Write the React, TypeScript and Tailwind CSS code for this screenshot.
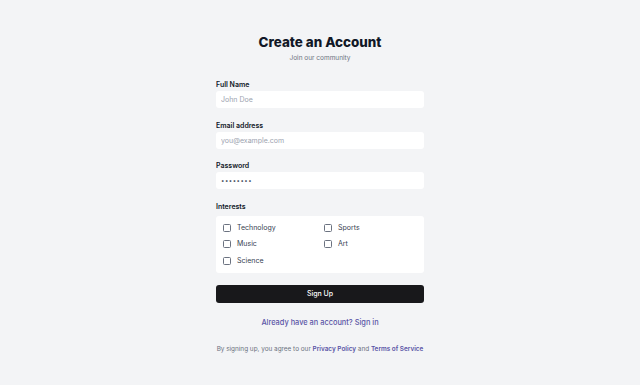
import React from "react";

const Field = ({ label, placeholder, type = "text", value }: { label: string; placeholder?: string; type?: string; value?: string }) => (
  <div className="flex flex-col">
    <label className="text-[7px] font-semibold text-[#111827] leading-[10px] mb-[1px]">{label}</label>
    <input
      type={type}
      placeholder={placeholder}
      defaultValue={value}
      className={
        "h-[17px] w-full rounded-[3px] bg-white px-[5px] text-[#374151] placeholder-[#9ca3af] outline-none " +
        (type === "password" ? "text-[6px] tracking-[0.5px]" : "text-[7px]")
      }
    />
  </div>
);

const Check = ({ label }: { label: string }) => (
  <label className="flex items-center gap-[6px] h-[16.5px]">
    <span className="w-[8px] h-[8px] rounded-[1.5px] border border-[#6b7280] bg-white" />
    <span className="text-[7px] text-[#374151]">{label}</span>
  </label>
);

export default function App() {
  return (
    <div className="min-h-[385px] w-full bg-[#f3f4f6] flex justify-center" style={{ fontFamily: "Inter, 'Noto Sans', sans-serif" }}>
      <div className="w-[208px] flex flex-col pt-[33px]">
        <h1 className="text-center text-[13.4px] font-extrabold text-[#111827] leading-[18px]">Create an Account</h1>
        <p className="text-center text-[6.5px] text-[#6b7280] mt-[2px] leading-[10px]">Join our community</p>
        <div className="flex flex-col gap-[12.5px] mt-[17px]">
          <Field label="Full Name" placeholder="John Doe" />
          <Field label="Email address" placeholder="you@example.com" type="email" />
          <Field label="Password" type="password" value="password" />
          <div className="flex flex-col">
            <span className="text-[7px] font-semibold text-[#111827] leading-[10px] mb-[4px]">Interests</span>
            <div className="bg-white rounded-[3px] grid grid-cols-[101px_1fr] pl-[7px] pr-[7px] py-[4px]">
              <Check label="Technology" />
              <Check label="Sports" />
              <Check label="Music" />
              <Check label="Art" />
              <Check label="Science" />
            </div>
          </div>
        </div>
        <button className="mt-[12px] h-[18px] w-full rounded-[3px] bg-[#18181b] text-white text-[7px] font-medium">Sign Up</button>
        <p className="text-center mt-[14px] text-[7.4px] font-medium text-[#5a55a6] leading-[12px]">Already have an account? Sign in</p>
        <p className="text-center mt-[15px] text-[6.4px] text-[#6b7280] leading-[10px] whitespace-nowrap">
          By signing up, you agree to our <span className="font-semibold text-[#5a55a6]">Privacy Policy</span> and <span className="font-semibold text-[#5a55a6]">Terms of Service</span>
        </p>
      </div>
    </div>
  );
}
